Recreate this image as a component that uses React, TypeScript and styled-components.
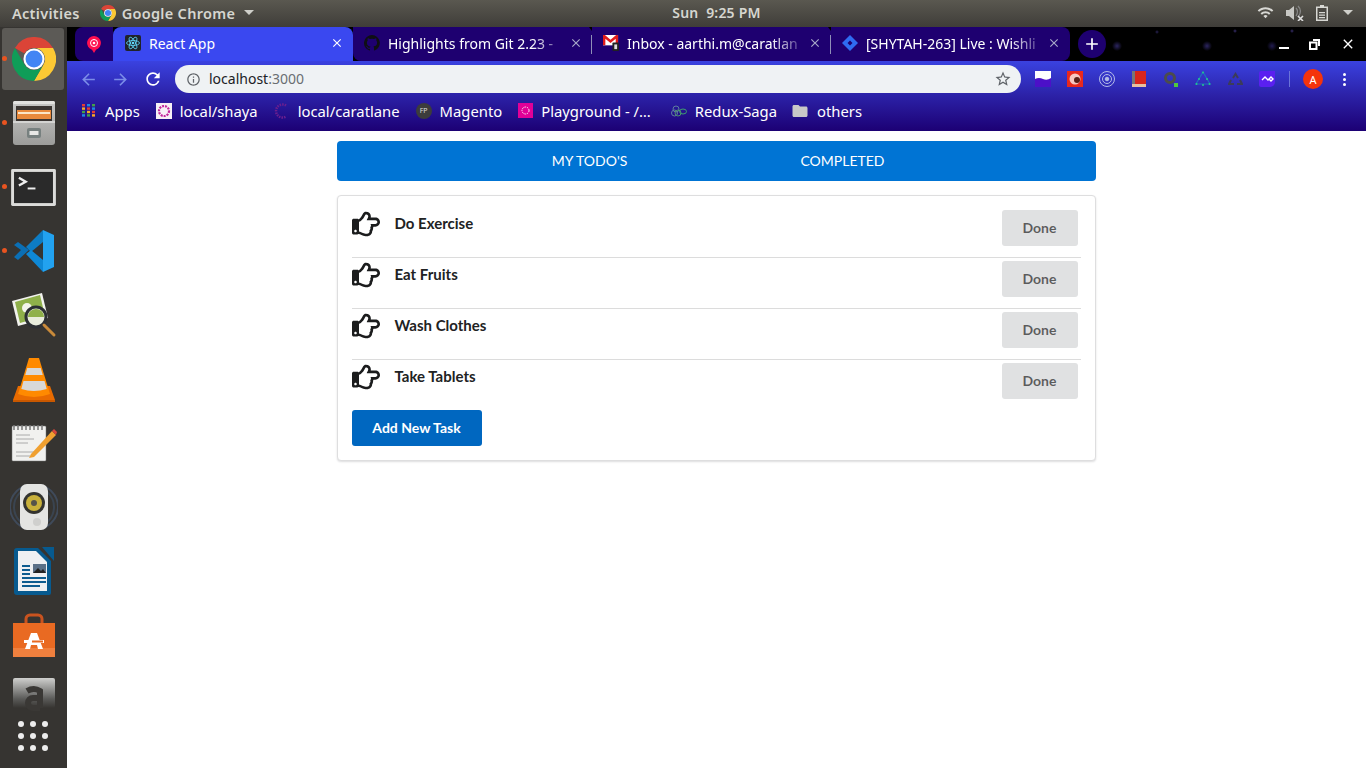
import React from 'react';
import styled, { createGlobalStyle } from 'styled-components';
import { FaRegHandPointRight } from 'react-icons/fa';
import { MdInfoOutline, MdStarBorder, MdArrowBack, MdArrowForward, MdRefresh, MdClose, MdAdd, MdFolder, MdWifi } from 'react-icons/md';

const GlobalStyle = createGlobalStyle`
  html, body { margin: 0; padding: 0; background: #fff; }
  * { box-sizing: border-box; }
`;

const UI_FONT = `"Noto Sans", "DejaVu Sans", sans-serif`;

const ChromeLogo = ({ size }: { size: number }) => (
  <svg width={size} height={size} viewBox="0 0 48 48">
    <path fill="#db4437" d="M3.2 12A24 24 0 0 1 44.8 12H24a12 12 0 0 0-10.4 6z" />
    <path fill="#fcc934" d="M44.8 12A24 24 0 0 1 24 48l10.4-18A12 12 0 0 0 24 12z" />
    <path fill="#0f9d58" d="M3.2 12A24 24 0 0 0 24 48l10.4-18A12 12 0 0 1 13.6 30z" />
    <circle cx="24" cy="24" r="11.5" fill="#fff" />
    <circle cx="24" cy="24" r="9.2" fill="#4285f4" />
  </svg>
);

const FilesIcon = () => (
  <svg width="42" height="44" viewBox="0 0 42 44">
    <defs>
      <linearGradient id="cabinet" x1="0" y1="0" x2="0" y2="1">
        <stop offset="0" stopColor="#c8c8c6" />
        <stop offset="1" stopColor="#9c9c9a" />
      </linearGradient>
    </defs>
    <rect x="0" y="0" width="42" height="44" rx="3" fill="url(#cabinet)" />
    <rect x="0" y="0" width="42" height="3" rx="1.500" fill="#e2e2e0" />
    <rect x="3" y="5" width="36" height="15" fill="#3a3532" />
    <rect x="4" y="9" width="34" height="9" fill="#e98a3c" />
    <rect x="5" y="11" width="32" height="2" fill="#fbe6c8" />
    <rect x="0" y="20" width="42" height="2" fill="#d4d4d2" />
    <rect x="14" y="27" width="14" height="10" rx="2" fill="#77807f" />
    <rect x="16.500" y="30" width="9" height="4" fill="#e8e8e6" />
  </svg>
);

const TerminalIcon = () => (
  <svg width="45" height="37" viewBox="0 0 46 38">
    <rect x="0" y="0" width="46" height="38" rx="1.500" fill="#dcdcda" />
    <rect x="3" y="3" width="40" height="32" fill="#2a2a2a" />
    <path d="M8 9l7 4-7 4" fill="none" stroke="#eee" strokeWidth="2.400" />
    <rect x="17" y="19" width="8" height="2" fill="#eee" />
  </svg>
);

const VsCodeIcon = () => (
  <svg width="42" height="42" viewBox="0 0 42 42">
    <path fill="#0b6fb5" d="M1 15l4-3 11 8-11 10-4-3 7-7z" />
    <path fill="#0d7cc4" d="M30 0L13 17l5 5 12-10z" />
    <path fill="#0e88d6" d="M18 20l-5 4 17 18 0-12z" />
    <path fill="#22a2f0" d="M30 0l11 5v32l-11 5z" />
  </svg>
);

const ImageViewerIcon = () => (
  <svg width="46" height="46" viewBox="0 0 46 46">
    <path fill="#f2f2ee" d="M1 9L31 1l6 25-30 8z" />
    <path fill="#8fb04a" d="M4 10l25-7 5 21-25 7z" />
    <circle cx="16" cy="16" r="5" fill="#f4f4ec" />
    <circle cx="25" cy="25" r="10" fill="#e8ecdc" stroke="#2c2f33" strokeWidth="3" />
    <path fill="#8fb04a" d="M17 25a8 8 0 0 1 16 0z" />
    <path d="M33 33l10 10" stroke="#c98a3a" strokeWidth="3" strokeLinecap="round" />
  </svg>
);

const VlcIcon = () => (
  <svg width="42" height="46" viewBox="0 0 42 46">
    <path fill="#e96b00" d="M5 30L0 44h42l-5-14z" />
    <path fill="#c95800" d="M0 44h42v2H0z" />
    <path fill="#ff8a00" d="M16 2h10l11 36q-16 6-32 0z" />
    <path fill="#d8d8d8" d="M14.300 12h13.400l2 7H12.300zM10.500 25h21l2.200 8q-13 4-25.400 0z" />
  </svg>
);

const NotesIcon = () => (
  <svg width="46" height="38" viewBox="0 0 46 38">
    <rect x="1" y="2" width="34" height="35" rx="1" fill="#f1f1ef" stroke="#777" strokeWidth=".5" />
    <path d="M3 1v5M7 1v5M11 1v5M15 1v5M19 1v5M23 1v5M27 1v5M31 1v5" stroke="#777" strokeWidth="1.500" />
    <path d="M5 11h14M5 15h18M5 19h12M5 28h22M5 32h14" stroke="#aaa" strokeWidth="1" />
    <path d="M20 30L41 7l4 4-22 22-5 1z" fill="#f0a030" />
    <path d="M41 7l2-2 3 3-1 3z" fill="#d8443c" />
  </svg>
);

const SpeakerIcon = () => (
  <svg width="48" height="46" viewBox="0 0 48 46">
    <ellipse cx="24" cy="23" rx="24" ry="23" fill="none" stroke="#3f4a5a" strokeWidth="2" />
    <ellipse cx="24" cy="23" rx="20" ry="20" fill="none" stroke="#3a4450" strokeWidth="2" />
    <rect x="10" y="0" width="28" height="46" rx="7" fill="#e4e4e2" />
    <circle cx="24" cy="19" r="11" fill="#33332f" />
    <circle cx="24" cy="19" r="8" fill="#c8b03a" />
    <circle cx="24" cy="19" r="3" fill="#55534a" />
    <circle cx="27" cy="38" r="4" fill="#cfcfcd" />
  </svg>
);

const WriterIcon = () => (
  <svg width="40" height="48" viewBox="0 0 40 48">
    <path fill="#075a8f" d="M28 0h12v14z" />
    <path fill="#075a8f" d="M3 1h21l13 13v32a2 2 0 0 1-2 2H3a3 3 0 0 1-3-3V4a3 3 0 0 1 3-3z" />
    <path fill="#eef0f2" d="M4 4h18l11 11v29H4z" />
    <path d="M8 19h8M8 23h8M8 27h8M8 31h24M8 35h24M8 39h18" stroke="#0d5c8f" strokeWidth="1.800" />
    <rect x="19" y="17" width="13" height="9" fill="#5a7087" />
    <path d="M19 26l5-5 3 3 2-2 3 4z" fill="#222" />
  </svg>
);

const StoreIcon = () => (
  <svg width="42" height="44" viewBox="0 0 42 44">
    <path fill="none" stroke="#c9531f" strokeWidth="3" d="M13 15V6a4 4 0 0 1 4-4h8a4 4 0 0 1 4 4v9" />
    <path fill="#f0803e" d="M0 10h42v34H0z" />
    <path fill="#e96a22" d="M0 10h42v25H0z" />
    <path fill="#fff" d="M18 20h6l6 16h-5l-1-4h-6l-1 4h-5z" />
    <rect x="11" y="27" width="20" height="3" fill="#fff" />
    <rect x="19" y="27.500" width="11" height="2" fill="#e96a22" />
  </svg>
);

const AmazonIcon = () => (
  <svg width="42" height="42" viewBox="0 0 42 42">
    <defs>
      <linearGradient id="amz" x1="0" y1="0" x2="0" y2="1">
        <stop offset="0" stopColor="#cfcfcd" />
        <stop offset=".7" stopColor="#5a5a58" />
        <stop offset="1" stopColor="#363431" />
      </linearGradient>
    </defs>
    <rect width="42" height="30" rx="2" fill="url(#amz)" />
    <path d="M14 13q7-4 13 0v17M27 20h-7a5 5 0 0 0 0 10h7" fill="none" stroke="#3a3835" strokeWidth="6" />
  </svg>
);

const dockIcons = [
  { key: 'chrome', icon: <ChromeLogo size={44} />, running: true, active: true },
  { key: 'files', icon: <FilesIcon />, running: true },
  { key: 'terminal', icon: <TerminalIcon />, running: true },
  { key: 'vscode', icon: <VsCodeIcon />, running: true },
  { key: 'viewer', icon: <ImageViewerIcon /> },
  { key: 'vlc', icon: <VlcIcon /> },
  { key: 'notes', icon: <NotesIcon /> },
  { key: 'speaker', icon: <SpeakerIcon /> },
  { key: 'writer', icon: <WriterIcon /> },
  { key: 'store', icon: <StoreIcon /> },
  { key: 'amazon', icon: <AmazonIcon /> },
];

const ReactFav = () => (
  <svg width="16" height="16" viewBox="0 0 16 16">
    <rect width="16" height="16" rx="2" fill="#20232a" />
    <g fill="none" stroke="#61dafb" strokeWidth=".8">
      <ellipse cx="8" cy="8" rx="6.500" ry="2.500" />
      <ellipse cx="8" cy="8" rx="6.500" ry="2.500" transform="rotate(60 8 8)" />
      <ellipse cx="8" cy="8" rx="6.500" ry="2.500" transform="rotate(120 8 8)" />
    </g>
    <circle cx="8" cy="8" r="1.300" fill="#61dafb" />
  </svg>
);

const PinnedFav = () => (
  <svg width="16" height="17" viewBox="0 0 16 17">
    <path fill="#ff0f4f" d="M8 0a7 7 0 0 1 2 13.700L8 17l-2-3.300A7 7 0 0 1 8 0z" />
    <circle cx="8" cy="7" r="3.500" fill="none" stroke="#fff" strokeWidth="1" />
    <circle cx="8" cy="7" r="1.300" fill="#fff" />
  </svg>
);

const GithubFav = () => (
  <svg width="16" height="16" viewBox="0 0 16 16">
    <path fill="#0f0f14" d="M8 0a8 8 0 0 0-2.500 15.600c.4.1.5-.2.5-.4v-1.400c-2.200.5-2.700-1-2.700-1-.4-.9-.9-1.200-.9-1.200-.7-.5.100-.5.100-.5.800.1 1.200.8 1.200.8.700 1.200 1.900.9 2.300.7.100-.5.300-.9.500-1.100-1.800-.2-3.600-.9-3.600-4 0-.9.300-1.600.8-2.100-.1-.2-.4-1 .1-2.100 0 0 .7-.2 2.200.8a7.500 7.500 0 0 1 4 0c1.500-1 2.200-.8 2.200-.8.400 1.100.2 1.900.1 2.100.5.600.8 1.300.8 2.100 0 3.100-1.900 3.700-3.700 3.900.3.300.6.800.6 1.500v2.200c0 .2.100.5.600.4A8 8 0 0 0 8 0z" />
  </svg>
);

const GmailFav = () => (
  <svg width="16" height="16" viewBox="0 0 17 17">
    <rect y="0" width="16" height="11" fill="#fff" />
    <path fill="#e01b1b" d="M0 0h2l6 5 6-5h2v11h-2.500V4L8 8.500 2.500 4v7H0z" />
    <rect x="10" y="8" width="7" height="9" rx="1" fill="#222" />
    <rect x="12" y="10" width="3" height="5" fill="#ddd" />
  </svg>
);

const JiraFav = () => (
  <svg width="16" height="16" viewBox="0 0 16 16">
    <path fill="#2f6cf2" d="M8 0l8 8-8 8-8-8zM8 5.500L5.500 8 8 10.500 10.500 8z" />
  </svg>
);

const AppsGrid = () => (
  <svg width="15" height="13" viewBox="0 0 15 13">
    {[0, 1, 2, 3].map((row) =>
      [0, 1, 2].map((col) => (
        <rect
          key={`${row}-${col}`}
          x={col * 5}
          y={row * 3.400}
          width="3"
          height="2.400"
          fill={['#e53935', '#f9a825', '#43a047', '#1e88e5'][(row + col * 3) % 4]}
        />
      )),
    )}
  </svg>
);

const ShayaFav = () => (
  <svg width="16" height="16" viewBox="0 0 16 16">
    <rect width="16" height="16" fill="#f6f0f6" />
    <circle cx="8" cy="8" r="5" fill="none" stroke="#c2249b" strokeWidth="2.200" strokeDasharray="2 1" />
  </svg>
);

const CaratFav = () => (
  <svg width="16" height="16" viewBox="0 0 16 16">
    <path d="M12 2.500A6.500 6.500 0 1 0 12 13.500" fill="none" stroke="#6c1f8f" strokeWidth="2.500" strokeDasharray="1.500 1" />
  </svg>
);

const PlaygroundFav = () => (
  <svg width="15" height="15" viewBox="0 0 15 15">
    <rect width="15" height="15" fill="#e10098" />
    <circle cx="7.500" cy="7.500" r="3.500" fill="none" stroke="#fff" strokeWidth="1" strokeDasharray="1.500 1" />
  </svg>
);

const ReduxFav = () => (
  <svg width="16" height="12" viewBox="0 0 16 12">
    <g fill="none" strokeWidth="1">
      <circle cx="5" cy="4" r="3" stroke="#5e7f9f" />
      <circle cx="3.500" cy="8" r="3" stroke="#5e7f9f" />
      <circle cx="7" cy="8" r="3" stroke="#4d8f6f" />
      <ellipse cx="12" cy="6.500" rx="3.500" ry="2.500" stroke="#3f9f6f" />
    </g>
  </svg>
);

const extensionIcons = [
  <svg key="a" width="16" height="16" viewBox="0 0 16 16">
    <rect width="16" height="16" fill="#fff" />
    <path fill="#4c10c8" d="M0 8q4-2 8 0t8-1v9H0z" />
  </svg>,
  <svg key="b" width="16" height="16" viewBox="0 0 16 16">
    <rect width="16" height="16" fill="#e8281c" />
    <circle cx="8" cy="8" r="5.500" fill="#f6c7c0" />
    <circle cx="10" cy="9" r="3" fill="#5a2018" />
  </svg>,
  <svg key="c" width="16" height="16" viewBox="0 0 16 16" fill="none" stroke="#b4bce8">
    <circle cx="8" cy="8" r="7.500" />
    <circle cx="8" cy="8" r="4.500" />
    <circle cx="8" cy="8" r="1.800" fill="#b4bce8" />
  </svg>,
  <svg key="d" width="14" height="16" viewBox="0 0 14 16">
    <rect width="14" height="16" fill="#d8261c" />
    <rect width="3" height="13" fill="#777" />
    <rect x="0" y="13" width="14" height="3" fill="#e8c0a0" />
  </svg>,
  <svg key="e" width="14" height="15" viewBox="0 0 14 15" fill="none">
    <circle cx="6" cy="6" r="4.500" stroke="#4c4c4c" strokeWidth="3" />
    <rect x="10" y="11" width="4" height="4" fill="#4fc83c" />
  </svg>,
  <svg key="f" width="16" height="16" viewBox="0 0 16 16" fill="none">
    <path d="M8 1L1 13h14z" stroke="#1f6fc0" strokeWidth="1.200" />
    <g fill="#24c88c">
      <circle cx="8" cy="1.500" r="1" />
      <circle cx="4" cy="8" r="1" />
      <circle cx="12" cy="8" r="1" />
      <circle cx="1.500" cy="13" r="1" />
      <circle cx="14.500" cy="13" r="1" />
      <circle cx="8" cy="14" r="1" />
    </g>
  </svg>,
  <svg key="g" width="15" height="15" viewBox="0 0 15 15" fill="none" stroke="#3c3c58" strokeWidth="2">
    <path d="M5 6l2.500-4 2.500 4M12 8l2 4H9M6 12H1l2-4" />
  </svg>,
  <svg key="h" width="16" height="16" viewBox="0 0 16 16">
    <path fill="#5a20f0" d="M2 0h14v11a5 5 0 0 1-5 5H2a2 2 0 0 1-2-2V2a2 2 0 0 1 2-2z" />
    <path d="M3 9l3-3 3 3 3-3 2 2-2 2-2-2" fill="none" stroke="#fff" strokeWidth="1.400" />
  </svg>,
];

const tabs = [
  { title: 'Highlights from Git 2.23 -', icon: <GithubFav /> },
  { title: 'Inbox - aarthi.m@caratlan', icon: <GmailFav /> },
  { title: '[SHYTAH-263] Live : Wishli', icon: <JiraFav /> },
];

const bookmarks = [
  { label: 'Apps', icon: <AppsGrid />, shift: 0 },
  { label: 'local/shaya', icon: <ShayaFav />, shift: 0 },
  { label: 'local/caratlane', icon: <CaratFav />, shift: 0 },
  { label: 'Magento', icon: <FpBadge>FP</FpBadge>, shift: 0 },
  { label: 'Playground - /…', icon: <PlaygroundFav />, shift: 0 },
  { label: 'Redux-Saga', icon: <ReduxFav />, shift: 4 },
  { label: 'others', icon: <MdFolder size={18} color="#c8c8c8" />, shift: -2 },
];

const todos = ['Do Exercise', 'Eat Fruits', 'Wash Clothes', 'Take Tablets'];

export default function App() {
  return (
    <Screen>
      <GlobalStyle />
      <TopBar>
        <TopLeft>
          <TopLabel>Activities</TopLabel>
          <AppMenu>
            <ChromeLogo size={16} />
            <TopLabel>Google Chrome</TopLabel>
            <Caret />
          </AppMenu>
        </TopLeft>
        <Clock>Sun&nbsp; 9:25 PM</Clock>
        <Tray>
          <MdWifi size={17} color="#d8d8d4" />
          <svg width="18" height="16" viewBox="0 0 18 16" fill="#c8c8c4">
            <path d="M0 5h3l5-4v14l-5-4H0z" />
            <path d="M10 3q3 3 0 8M12 1q5 5 0 11" fill="none" stroke="#888" strokeWidth="1.200" />
            <path d="M12 11l5 5M17 11l-5 5" stroke="#ddd" strokeWidth="1.600" />
          </svg>
          <svg width="12" height="16" viewBox="0 0 12 16">
            <path fill="#d8d8d4" d="M4 0h4v1.500h4V16H0V1.500h4z" />
            <path fill="#4a4843" d="M1.500 3h9v11.500h-9z" />
            <path fill="#d8d8d4" d="M3 7h6v1.200H3zM3 9.500h6v1.200H3zM3 12h6v1.200H3z" />
          </svg>
          <Caret />
        </Tray>
      </TopBar>
      <Body>
        <Dock>
          {dockIcons.map(({ key, icon, running, active }) => (
            <DockItem key={key} $active={!!active}>
              {running && <RunningDot />}
              {icon}
            </DockItem>
          ))}
          <AppGridButton>
            {Array.from({ length: 9 }).map((_, i) => (
              <AppGridDot key={i} />
            ))}
          </AppGridButton>
        </Dock>
        <Main>
          <Browser>
            <TabStrip>
              <PinnedTab>
                <PinnedFav />
              </PinnedTab>
              <ActiveTab>
                <ReactFav />
                <TabTitle $active>React App</TabTitle>
                <MdClose size={14} color="#fff" />
              </ActiveTab>
              {tabs.map(({ title, icon }, i) => (
                <Tab key={title} $last={i === tabs.length - 1} $first={i === 0}>
                  {icon}
                  <TabTitle>{title}</TabTitle>
                  <MdClose size={14} color="#a8a8c8" />
                </Tab>
              ))}
              <NewTab>
                <MdAdd size={20} color="#fff" />
              </NewTab>
              <WindowControls>
                <MinimizeBar />
                <svg width="11" height="11" viewBox="0 0 11 11" fill="none" stroke="#fff" strokeWidth="2">
                  <rect x="1" y="3.500" width="6.500" height="6.500" />
                  <path d="M4 1h6v6" />
                </svg>
                <MdClose size={16} color="#fff" />
              </WindowControls>
            </TabStrip>
            <Toolbar>
              <NavIcons>
                <MdArrowBack size={19} color="#7b8de8" />
                <MdArrowForward size={19} color="#7b8de8" />
                <MdRefresh size={20} color="#fff" />
              </NavIcons>
              <Omnibox>
                <MdInfoOutline size={15} color="#5f6368" />
                <Url>
                  localhost<UrlPort>:3000</UrlPort>
                </Url>
                <MdStarBorder size={18} color="#5f6368" />
              </Omnibox>
              <Extensions>
                {extensionIcons.map((icon, i) => (
                  <ExtensionSlot key={i}>{icon}</ExtensionSlot>
                ))}
              </Extensions>
              <ToolbarDivider />
              <Avatar>A</Avatar>
              <KebabMenu>
                <KebabDot />
                <KebabDot />
                <KebabDot />
              </KebabMenu>
            </Toolbar>
            <BookmarkBar>
              {bookmarks.map(({ label, icon, shift }) => (
                <Bookmark key={label} $shift={shift}>
                  {icon}
                  <span>{label}</span>
                </Bookmark>
              ))}
            </BookmarkBar>
          </Browser>
          <Page>
            <Container>
              <MenuBar>
                <MenuTab>MY TODO'S</MenuTab>
                <MenuTab>COMPLETED</MenuTab>
              </MenuBar>
              <Card>
                {todos.map((todo, i) => (
                  <TodoRow key={todo} $last={i === todos.length - 1}>
                    <HandIcon>
                      <FaRegHandPointRight size={28} />
                    </HandIcon>
                    <TodoTitle>{todo}</TodoTitle>
                    <DoneButton>Done</DoneButton>
                  </TodoRow>
                ))}
                <AddButton>Add New Task</AddButton>
              </Card>
            </Container>
          </Page>
        </Main>
      </Body>
    </Screen>
  );
}

function FpBadge({ children }: { children: React.ReactNode }) {
  return <FpCircle>{children}</FpCircle>;
}

const Screen = styled.div`
  width: 1366px;
  height: 768px;
  display: flex;
  flex-direction: column;
  overflow: hidden;
  font-family: ${UI_FONT};
`;

const TopBar = styled.div`
  height: 27px;
  flex: none;
  display: grid;
  grid-template-columns: 1fr auto 1fr;
  align-items: center;
  padding: 0 13px 2px 12px;
  background: linear-gradient(#5a5850, #3f3d39);
  color: #d6d6d0;
  font-size: 14.5px;
  font-weight: 600;
`;

const TopLeft = styled.div`
  display: flex;
  align-items: center;
  gap: 20px;
`;

const TopLabel = styled.span`
  letter-spacing: 0.3px;
`;

const AppMenu = styled.div`
  display: flex;
  align-items: center;
  gap: 6px;
`;

const Caret = styled.span`
  width: 0;
  height: 0;
  margin-left: 3px;
  border-left: 5px solid transparent;
  border-right: 5px solid transparent;
  border-top: 5px solid #cfcfca;
`;

const Clock = styled.div`
  margin-left: 68px;
  letter-spacing: 0.2px;
  white-space: nowrap;
  font-size: 14px;
`;

const Tray = styled.div`
  display: flex;
  align-items: center;
  justify-content: flex-end;
  gap: 12px;
`;

const Body = styled.div`
  flex: 1;
  display: flex;
  min-height: 0;
`;

const Dock = styled.div`
  width: 67px;
  flex: none;
  position: relative;
  display: flex;
  flex-direction: column;
  overflow: hidden;
  background: #363431;
`;

const DockItem = styled.div<{ $active: boolean }>`
  position: relative;
  flex: none;
  height: 64px;
  display: flex;
  align-items: center;
  justify-content: center;
  &::before {
    content: '';
    position: absolute;
    inset: 1px 3px 1px 2px;
    border-radius: 3px;
    background: ${({ $active }) => ($active ? '#5c5a56' : 'transparent')};
  }
  & > svg {
    position: relative;
  }
`;

const RunningDot = styled.span`
  position: absolute;
  left: 2px;
  top: 29px;
  width: 5px;
  height: 5px;
  border-radius: 50%;
  background: #e95420;
  z-index: 1;
`;

const AppGridButton = styled.div`
  position: absolute;
  left: 18px;
  bottom: 17px;
  display: grid;
  grid-template-columns: repeat(3, 6px);
  gap: 6px;
`;

const AppGridDot = styled.span`
  width: 6px;
  height: 6px;
  border-radius: 50%;
  background: #ededed;
`;

const Main = styled.div`
  flex: 1;
  min-width: 0;
  display: flex;
  flex-direction: column;
`;

const Browser = styled.div`
  flex: none;
  background: linear-gradient(#3a42e0 34px, #2c22a8 68px, #1c0074 104px);
`;

const TabStrip = styled.div`
  height: 34px;
  display: flex;
  align-items: stretch;
  padding-left: 8px;
  background-color: #000;
  background-image: radial-gradient(circle 5px at 1050px 19px, #2c2560, transparent),
    radial-gradient(circle 5px at 1140px 19px, #2c2560, transparent),
    radial-gradient(circle 5px at 1205px 19px, #221c50, transparent),
    radial-gradient(circle 2px at 1090px 5px, #2a2458, transparent),
    radial-gradient(circle 2px at 1168px 4px, #3a3070, transparent),
    radial-gradient(circle 2px at 1225px 4px, #3a3070, transparent);
`;

const PinnedTab = styled.div`
  width: 38px;
  display: flex;
  align-items: center;
  justify-content: center;
  background: #1e0070;
  border-radius: 8px 0 0 8px;
`;

const ActiveTab = styled.div`
  width: 240px;
  display: flex;
  align-items: center;
  gap: 8px;
  padding: 0 9px 2px 12px;
  background: #3a48f0;
  border-radius: 8px 8px 0 0;
`;

const Tab = styled.div<{ $first: boolean; $last: boolean }>`
  position: relative;
  width: 239px;
  display: flex;
  align-items: center;
  gap: 8px;
  padding: 0 9px 2px 11px;
  background: #1e0070;
  border-radius: ${({ $first, $last }) => `${$last ? '0 8px' : '0 0'} ${$last ? '8px' : '0'} ${$first ? '8px' : '0'}`};
  &::after {
    content: ${({ $last }) => ($last ? 'none' : "''")};
    position: absolute;
    right: 0;
    top: 8px;
    bottom: 7px;
    width: 1px;
    background: #8f8fb8;
  }
  &::before {
    content: ${({ $last }) => ($last ? 'none' : "''")};
    position: absolute;
    right: -3px;
    top: 0;
    border-left: 3.5px solid transparent;
    border-right: 3.5px solid transparent;
    border-top: 4px solid #000;
  }
`;

const TabTitle = styled.div<{ $active?: boolean }>`
  flex: 1;
  min-width: 0;
  margin-right: -3px;
  white-space: nowrap;
  color: #fff;
  font-size: 14px;
  mask-image: ${({ $active }) => ($active ? 'none' : 'linear-gradient(to right, #000 82%, rgba(0, 0, 0, 0.15))')};
`;

const NewTab = styled.div`
  width: 28px;
  height: 28px;
  margin: 3px 0 0 8px;
  border-radius: 50%;
  display: flex;
  align-items: center;
  justify-content: center;
  background: #1e0070;
`;

const WindowControls = styled.div`
  margin-left: auto;
  width: 87px;
  padding-right: 10px;
  display: flex;
  align-items: center;
  justify-content: space-between;
`;

const MinimizeBar = styled.span`
  width: 10px;
  height: 2px;
  margin-top: 8px;
  background: #fff;
`;

const Toolbar = styled.div`
  height: 34px;
  display: flex;
  align-items: center;
  padding: 2px 13px 0 0;
`;

const NavIcons = styled.div`
  width: 108px;
  flex: none;
  padding: 0 12px 0 12px;
  display: flex;
  align-items: center;
  justify-content: space-between;
`;

const Omnibox = styled.div`
  width: 846px;
  height: 28px;
  flex: none;
  display: flex;
  align-items: center;
  padding: 0 9px 0 11px;
  border-radius: 14px;
  background: #eff2f4;
  font-size: 14px;
`;

const Url = styled.div`
  flex: 1;
  margin: 0 0 2px 8px;
  color: #202124;
`;

const UrlPort = styled.span`
  color: #6a6e72;
`;

const Extensions = styled.div`
  display: flex;
  margin-left: 6px;
`;

const ExtensionSlot = styled.div`
  width: 32px;
  display: flex;
  justify-content: center;
  align-items: center;
`;

const ToolbarDivider = styled.span`
  width: 1px;
  height: 16px;
  margin: 0 13px 0 6px;
  background: #6a74d8;
`;

const Avatar = styled.div`
  width: 20px;
  height: 20px;
  border-radius: 50%;
  display: flex;
  align-items: center;
  justify-content: center;
  background: #f4330c;
  color: #fff;
  font-size: 11px;
`;

const KebabMenu = styled.div`
  margin-left: 20px;
  display: flex;
  flex-direction: column;
  gap: 2px;
`;

const KebabDot = styled.span`
  width: 3px;
  height: 3px;
  border-radius: 50%;
  background: #fff;
`;

const BookmarkBar = styled.div`
  height: 36px;
  display: flex;
  align-items: center;
  gap: 16px;
  padding: 0 15px 5px;
`;

const Bookmark = styled.div<{ $shift: number }>`
  display: flex;
  align-items: center;
  gap: 8px;
  margin-left: ${({ $shift }) => $shift}px;
  color: #fff;
  font-size: 14.8px;
  white-space: nowrap;
`;

const FpCircle = styled.span`
  width: 16px;
  height: 16px;
  border-radius: 50%;
  display: flex;
  align-items: center;
  justify-content: center;
  background: #3c3c3c;
  color: #ddd;
  font-size: 7px;
`;

const Page = styled.div`
  flex: 1;
  background: #fff;
  display: flex;
  justify-content: center;
  padding: 10px 1px 0 0;
  font-family: Lato, "Liberation Sans", sans-serif;
`;

const Container = styled.div`
  width: 759px;
`;

const MenuBar = styled.div`
  height: 40px;
  display: flex;
  justify-content: center;
  border-radius: 4px;
  background: #0074d4;
`;

const MenuTab = styled.div`
  width: 253px;
  padding-bottom: 2px;
  display: flex;
  align-items: center;
  justify-content: center;
  color: #fff;
  font-size: 14px;
`;

const Card = styled.div`
  margin-top: 14px;
  padding: 11px 14px 14px;
  border: 1px solid #dededf;
  border-radius: 4px;
  box-shadow: 0 1px 2px rgba(34, 36, 38, 0.15);
  background: #fff;
`;

const TodoRow = styled.div<{ $last: boolean }>`
  display: flex;
  align-items: flex-start;
  padding: 3px 3px 11px 0;
  border-bottom: ${({ $last }) => ($last ? 'none' : '1px solid #dcdcdc')};
`;

const HandIcon = styled.div`
  width: 28px;
  height: 28px;
  margin-right: 15px;
  color: #1b1c1d;
  display: flex;
`;

const TodoTitle = styled.div`
  flex: 1;
  margin-top: 2px;
  color: #212223;
  font-size: 15px;
  font-weight: 700;
  line-height: 22px;
`;

const DoneButton = styled.button`
  width: 76px;
  height: 36px;
  padding: 0 0 2px;
  border: none;
  border-radius: 3px;
  background: #e0e1e2;
  color: rgba(0, 0, 0, 0.6);
  font-family: inherit;
  font-size: 14px;
  font-weight: 700;
`;

const AddButton = styled.button`
  display: block;
  width: 130px;
  height: 36px;
  padding: 0 0 2px;
  border: none;
  border-radius: 3px;
  background: #0067c0;
  color: #fff;
  font-family: inherit;
  font-size: 14px;
  font-weight: 700;
`;
